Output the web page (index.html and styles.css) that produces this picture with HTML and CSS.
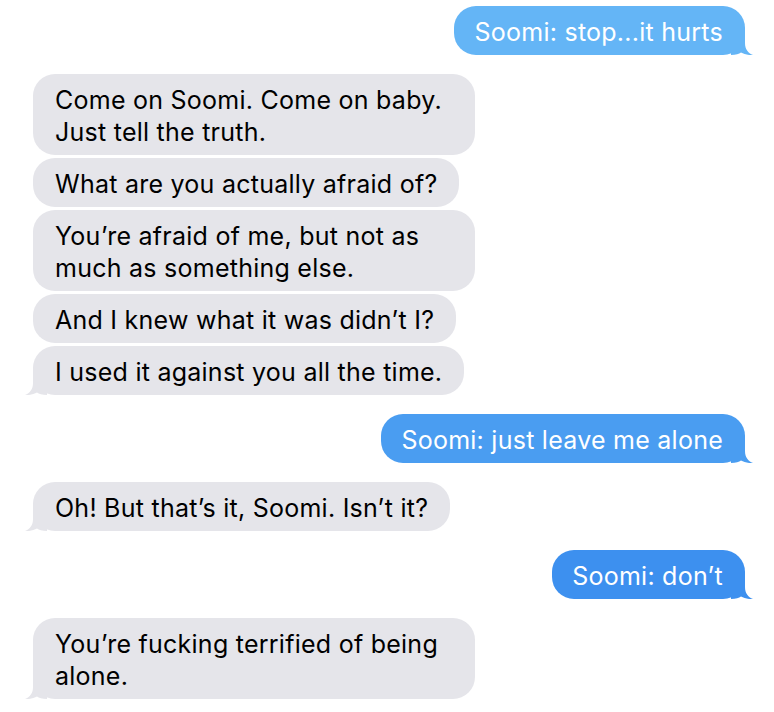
FILE: index.html
```html
<!DOCTYPE html>
<html>
<head>
    <title>Messages</title>
    <link rel="stylesheet" href="styles.css">
</head>

<body>
    <div class="chat">
        <div class="group sent">
            <div class="bubble shade-1 tail">Soomi: stop...it hurts
                <svg class="tail-shape" viewBox="0 0 22 22"><path d="M0,0 H14 V10 C14,16 17,20 22,22 C17,22.5 13,21 10,19.5 C8,21 5,22 0,22 Z"/></svg>
            </div>
        </div>

        <div class="group received">
            <div class="bubble">Come on Soomi. Come on baby. Just tell the truth.</div>
            <div class="bubble">What are you actually afraid of?</div>
            <div class="bubble">You’re afraid of me, but not as much as something else.</div>
            <div class="bubble">And I knew what it was didn’t I?</div>
            <div class="bubble tail">I used it against you all the time.
                <svg class="tail-shape" viewBox="0 0 22 22"><path d="M0,0 H14 V10 C14,16 17,20 22,22 C17,22.5 13,21 10,19.5 C8,21 5,22 0,22 Z"/></svg>
            </div>
        </div>

        <div class="group sent">
            <div class="bubble shade-2 tail">Soomi: just leave me alone
                <svg class="tail-shape" viewBox="0 0 22 22"><path d="M0,0 H14 V10 C14,16 17,20 22,22 C17,22.5 13,21 10,19.5 C8,21 5,22 0,22 Z"/></svg>
            </div>
        </div>

        <div class="group received">
            <div class="bubble tail">Oh! But that’s it, Soomi. Isn’t it?
                <svg class="tail-shape" viewBox="0 0 22 22"><path d="M0,0 H14 V10 C14,16 17,20 22,22 C17,22.5 13,21 10,19.5 C8,21 5,22 0,22 Z"/></svg>
            </div>
        </div>

        <div class="group sent">
            <div class="bubble shade-3 tail">Soomi: don’t
                <svg class="tail-shape" viewBox="0 0 22 22"><path d="M0,0 H14 V10 C14,16 17,20 22,22 C17,22.5 13,21 10,19.5 C8,21 5,22 0,22 Z"/></svg>
            </div>
        </div>

        <div class="group received">
            <div class="bubble tail">You’re fucking terrified of being alone.
                <svg class="tail-shape" viewBox="0 0 22 22"><path d="M0,0 H14 V10 C14,16 17,20 22,22 C17,22.5 13,21 10,19.5 C8,21 5,22 0,22 Z"/></svg>
            </div>
        </div>
    </div>
</body>

</html>
```

FILE: styles.css
```css
body {
    margin: 0;
    background: #ffffff;
    font-family: Inter, "Noto Sans", sans-serif;
    font-size: 25px;
    letter-spacing: 0.25px;
}

.chat {
    display: flex;
    flex-direction: column;
    gap: 19px;
    padding-top: 6px;
}

.group {
    display: flex;
    flex-direction: column;
    gap: 3px;
}

.sent {
    align-items: flex-end;
    padding-right: 29px;
}

.received {
    align-items: flex-start;
    padding-left: 33px;
}

.bubble {
    position: relative;
    max-width: 442px;
    box-sizing: border-box;
    padding: 10px 22px 7px 22px;
    line-height: 32px;
    border-radius: 22px;
    background: #e5e5ea;
    color: #000000;
    fill: #e5e5ea;
}

.sent .bubble {
    color: #ffffff;
    padding-left: 20px;
}

.shade-1 {
    background: #64b5f6;
    fill: #64b5f6;
}

.shade-2 {
    background: #4a9df1;
    fill: #4a9df1;
}

.shade-3 {
    background: #3d90ef;
    fill: #3d90ef;
}

.tail-shape {
    display: none;
    position: absolute;
    bottom: 0;
    width: 22px;
    height: 22px;
}

.tail .tail-shape {
    display: block;
}

.sent .tail-shape {
    right: -8px;
}

.received .tail-shape {
    left: -8px;
    transform: scaleX(-1);
}
```
